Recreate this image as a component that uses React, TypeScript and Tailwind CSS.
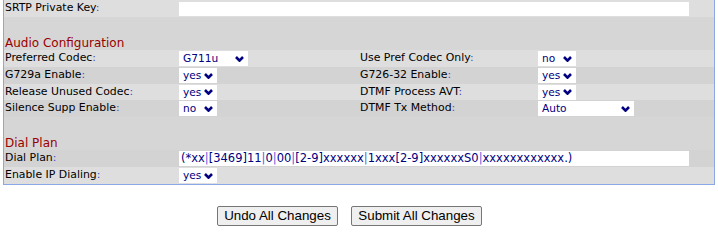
import type { ReactNode } from 'react'

const LABEL_FONT = { fontFamily: '"DejaVu Sans", Verdana, sans-serif' }

function Chevron() {
  return (
    <svg width="9" height="6" viewBox="0 0 9 6" className="shrink-0">
      <polyline points="1,1 4.5,4.6 8,1" fill="none" stroke="#000080" strokeWidth="2.6" />
    </svg>
  )
}

function Pick({ value, width }: { value: string; width: string }) {
  return (
    <div className={`flex h-[15px] items-center justify-between bg-white pl-[4px] pr-[4px] text-[10.6px] text-[#000080] ${width}`}>
      <span>{value}</span>
      <Chevron />
    </div>
  )
}

function Label({ text }: { text: string }) {
  return (
    <span className="pl-[1px] text-black">
      {text}
      <span className="text-[#4848cc]">:</span>
    </span>
  )
}

function Row({ className, children }: { className: string; children?: ReactNode }) {
  return <div className={`grid grid-cols-[175px_180px_179px_176px] items-center ${className}`}>{children}</div>
}

function Heading({ text }: { text: string }) {
  return (
    <div className="col-span-4 self-end pb-[1px] pl-[1px] text-[12px] leading-none text-[#990000]">{text}</div>
  )
}

const DIAL_PLAN = '(*xx|[3469]11|0|00|[2-9]xxxxxx|1xxx[2-9]xxxxxxS0|xxxxxxxxxxxx.)'

export default function App() {
  return (
    <div className="h-[237px] w-[718px] overflow-hidden bg-white" style={LABEL_FONT}>
      <div className="ml-[3px] w-[712px] border-x border-b border-[#8ba7e8] text-[10.9px] leading-none">
        <Row className="h-[17px] bg-[#dedede]">
          <Label text="SRTP Private Key" />
          <div className="col-span-3">
            <div className="h-[14px] w-[510px] bg-white" />
          </div>
        </Row>
        <Row className="h-[16px] bg-[#d6d6d6]" />
        <Row className="h-[17px] bg-[#d6d6d6]">
          <Heading text="Audio Configuration" />
        </Row>
        <Row className="h-[17px] bg-[#dedede]">
          <Label text="Preferred Codec" />
          <Pick value="G711u" width="w-[69px]" />
          <Label text="Use Pref Codec Only" />
          <Pick value="no" width="w-[38px]" />
        </Row>
        <Row className="h-[17px] bg-[#d3d3d3]">
          <Label text="G729a Enable" />
          <Pick value="yes" width="w-[38px]" />
          <Label text="G726-32 Enable" />
          <Pick value="yes" width="w-[38px]" />
        </Row>
        <Row className="h-[16px] bg-[#dedede]">
          <Label text="Release Unused Codec" />
          <Pick value="yes" width="w-[38px]" />
          <Label text="DTMF Process AVT" />
          <Pick value="yes" width="w-[38px]" />
        </Row>
        <Row className="h-[17px] bg-[#d3d3d3]">
          <Label text="Silence Supp Enable" />
          <Pick value="no" width="w-[38px]" />
          <Label text="DTMF Tx Method" />
          <Pick value="Auto" width="w-[96px]" />
        </Row>
        <Row className="h-[17px] bg-[#d6d6d6]" />
        <Row className="h-[16px] bg-[#d6d6d6]">
          <Heading text="Dial Plan" />
        </Row>
        <Row className="h-[17px] bg-[#d3d3d3]">
          <Label text="Dial Plan" />
          <div className="col-span-3">
            <div className="flex h-[15px] w-[510px] items-center bg-white pl-[2px] text-[11.5px] text-[#000080]">
              {DIAL_PLAN.split('|').map((part, i) => (
                <span key={i}>
                  {i > 0 && <span className="text-[#5c5ce0]">|</span>}
                  {part}
                </span>
              ))}
            </div>
          </div>
        </Row>
        <Row className="h-[17px] bg-[#dedede]">
          <Label text="Enable IP Dialing" />
          <Pick value="yes" width="w-[38px]" />
        </Row>
      </div>

      <div className="mt-[21px] flex gap-[13px] pl-[217px]" style={{ fontFamily: '"Liberation Sans", Arial, sans-serif' }}>
        <button className="h-[20px] w-[121px] rounded-[2px] border border-[#767676] bg-[#efefef] text-[13.33px] leading-none text-black">
          Undo All Changes
        </button>
        <button className="h-[20px] w-[131px] rounded-[2px] border border-[#767676] bg-[#efefef] text-[13.33px] leading-none text-black">
          Submit All Changes
        </button>
      </div>
    </div>
  )
}
